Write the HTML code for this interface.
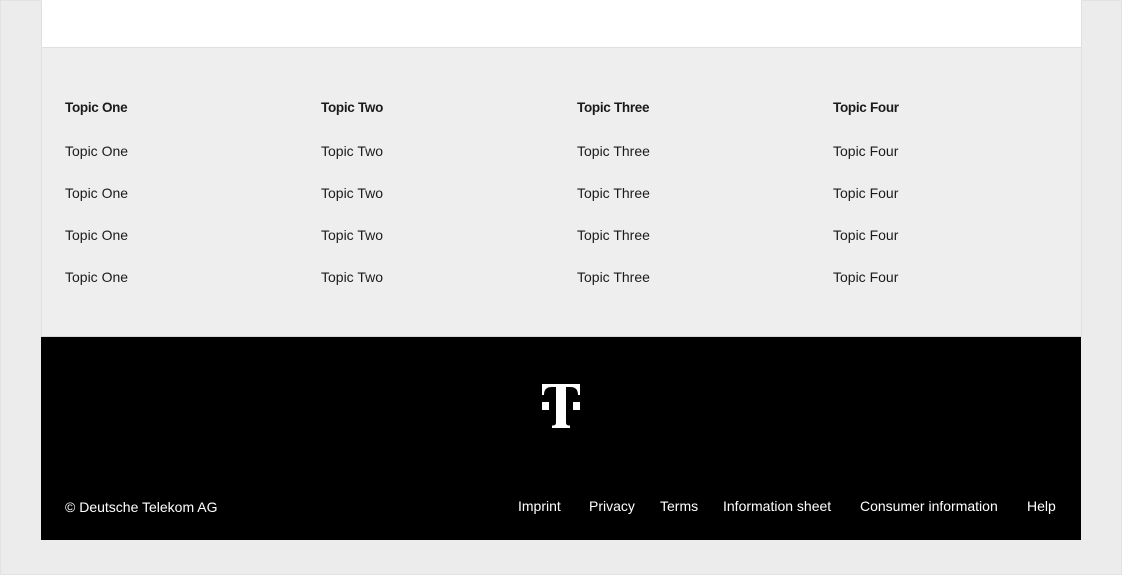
<!DOCTYPE html>
<html><head><style>
body{margin:0;width:1122px;height:575px;background:#ececec;font-family:"Liberation Sans",sans-serif;position:relative;overflow:hidden;}
.outer{position:absolute;left:0;top:0;width:1120px;height:573px;border:1px solid #e2e2e2;}
.white{position:absolute;left:41px;top:0;width:1039px;height:47px;background:#fff;border:1px solid #e0e0e0;border-top:none;}
.gray{position:absolute;left:41px;top:48px;width:1039px;height:288px;background:#eeeeee;border-left:1px solid #e0e0e0;border-right:1px solid #e0e0e0;border-bottom:1px solid #d8d8d8;}
.col{position:absolute;top:1px;font-size:14px;color:#1a1a1a;}
.col div{position:absolute;left:0;white-space:nowrap;}
.col .h{font-weight:bold;top:51px;font-size:13.5px;letter-spacing:-0.3px;}
.black{position:absolute;left:41px;top:337px;width:1040px;height:203px;background:#000;color:#fff;font-size:14px;}
.links span{position:absolute;top:161px;white-space:nowrap;}
</style></head><body>
<div class="outer"></div>
<div class="white"></div>
<div class="gray">
<div class="col" style="left:23px"><div class="h">Topic One</div><div style="top:94px">Topic One</div><div style="top:136px">Topic One</div><div style="top:178px">Topic One</div><div style="top:220px">Topic One</div></div>
<div class="col" style="left:279px"><div class="h">Topic Two</div><div style="top:94px">Topic Two</div><div style="top:136px">Topic Two</div><div style="top:178px">Topic Two</div><div style="top:220px">Topic Two</div></div>
<div class="col" style="left:535px"><div class="h">Topic Three</div><div style="top:94px">Topic Three</div><div style="top:136px">Topic Three</div><div style="top:178px">Topic Three</div><div style="top:220px">Topic Three</div></div>
<div class="col" style="left:791px"><div class="h">Topic Four</div><div style="top:94px">Topic Four</div><div style="top:136px">Topic Four</div><div style="top:178px">Topic Four</div><div style="top:220px">Topic Four</div></div>
</div>
<div class="black">
<svg style="position:absolute;left:501px;top:47px" width="38" height="44" viewBox="0 0 38 44">
<path fill="#fff" d="M0 0H38V11H36C36 5 33 3 28 3H24V38C24 41 25 41.5 28 41.5V44H10V41.5C13 41.5 14 41 14 38V3H10C5 3 2 5 2 11H0Z"/>
<rect fill="#fff" x="0" y="18" width="7" height="8"/><rect fill="#fff" x="31" y="18" width="7" height="8"/>
</svg>
<div class="links">
<span style="left:24px;top:162px">© Deutsche Telekom AG</span>
<span style="left:477px">Imprint</span>
<span style="left:548px">Privacy</span>
<span style="left:619px">Terms</span>
<span style="left:682px">Information sheet</span>
<span style="left:819px">Consumer information</span>
<span style="left:986px">Help</span>
</div>
</div>
</body></html>
